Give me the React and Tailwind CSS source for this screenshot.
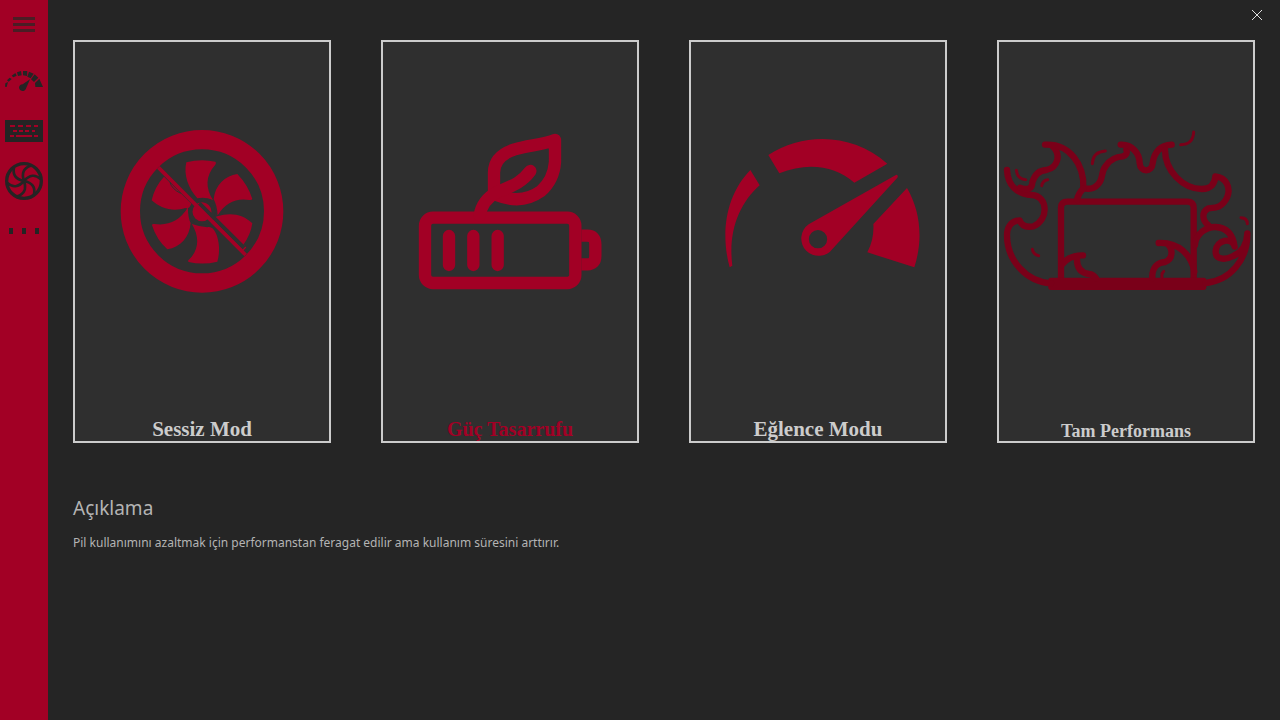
const ink = '#242424'
const red = '#a20025'

function GaugeSmall() {
  return (
    <svg viewBox="0 168 144 150" className="h-full w-full" aria-hidden="true">
      <g fill={ink}>
        <path d="M15 260 L16 250 L24 246 L20 261 Z" />
        <path d="M21 241 L29 233 L35 237 L26 245 Z" />
        <path d="M35 227 L46 219 L50 227 L40 232 Z" />
        <path d="M51 217 L63 213 L65 226 L54 228 Z" />
        <path d="M69 213 L82 213 L81 228 L69 226 Z" />
        <path d="M87 215 L101 221 L92 235 L82 230 Z" />
        <path d="M104 223 L115 233 L102 246 L93 238 Z" />
        <path d="M118 236 L129 261 L106 261 L105 249 Z" />
        <path d="M90 238 L79 263 Q76 273 67 273 Q57 271 57 262 Q59 253 68 253 Z" />
      </g>
    </svg>
  )
}

function KeyboardSmall() {
  return (
    <svg viewBox="0 318 144 150" className="h-full w-full" aria-hidden="true">
      <rect x="15" y="360" width="114" height="66" fill={ink} />
      <g stroke={red} strokeWidth="6">
        <path d="M30 378 H45 M54 378 H69 M78 378 H93 M102 378 H114" />
        <path d="M39 393 H51 M57 393 H69 M75 393 H87 M96 393 H105" />
        <path d="M30 408 H42 M48 408 H96 M102 408 H114" />
      </g>
    </svg>
  )
}

function FanSmall() {
  return (
    <svg viewBox="0 468 144 150" className="h-full w-full" aria-hidden="true">
      <g transform="translate(72 543)" fill="none" stroke={ink} strokeWidth="8">
        <circle r="52" strokeWidth="10" />
        <circle r="6" fill={ink} stroke="none" />
        {[0, 60, 120, 180, 240, 300].map((angle) => (
          <path key={angle} d="M0 0 Q-12 -36 20 -46" transform={`rotate(${angle})`} />
        ))}
      </g>
    </svg>
  )
}

function MoreSmall() {
  return (
    <svg viewBox="0 618 144 150" className="h-full w-full" aria-hidden="true">
      <path d="M27 684 H39 V702 H27 Z M66 684 H78 V702 H66 Z M105 684 H117 V702 H105 Z" fill={ink} />
    </svg>
  )
}

function SilentArt() {
  return (
    <svg viewBox="-105 0 762 540" className="w-full" fill={red} aria-hidden="true">
      <circle cx="276" cy="274" r="215" fill="none" stroke={red} strokeWidth="58" />
      <path d="M229 127 Q273 115 316 125 Q320 128 316 134 C285 168 287 205 309 240 Q285 230 262 235 C235 205 220 165 229 127 Z" />
      <path d="M311 238 C315 195 345 168 382 162 Q414 195 427 237 Q425 241 418 240 C380 233 345 248 323 286 Q321 255 311 238 Z" />
      <path d="M322 289 C360 276 400 282 427 310 Q422 345 400 374 L316 291 Z" />
      <path d="M292 322 C310 315 325 345 327 380 Q328 405 322 425 Q278 436 236 426 Q232 422 238 418 C268 388 268 350 246 312 Q268 320 292 322 Z" />
      <path d="M242 310 C238 352 212 382 172 388 Q140 360 126 316 Q126 311 133 312 C175 318 208 304 234 262 Q233 292 242 310 Z" />
      <path d="M162 170 L248 255 Q238 268 226 264 C190 276 152 266 125 241 Q134 200 162 170 Z" />
      <path d="M310 300 L402 390" stroke={red} strokeWidth="20" />
      <circle cx="276" cy="275" r="34" fill={red} stroke="#2f2f2f" strokeWidth="11" />
      <path d="M256 252 L292 288" stroke="#2f2f2f" strokeWidth="8" />
      <path d="M268 250 L402 384" stroke="#2f2f2f" strokeWidth="12" />
      <path d="M145 142 L407 405" stroke={red} strokeWidth="11" />
      <path d="M180 187 Q185 207 212 220" fill="none" stroke="#2f2f2f" strokeWidth="3" />
    </svg>
  )
}

function SavingArt() {
  return (
    <svg viewBox="-51 0 762 540" className="w-full" fill="none" stroke={red} strokeWidth="37" aria-hidden="true">
      <rect x="75" y="293" width="451" height="196" rx="24" />
      <path d="M544 347 H562 Q586 347 586 373 V407 Q586 433 562 433 H544" />
      <path d="M147 348 V435 M220 348 V435 M293 348 V435" strokeLinecap="round" />
      <path d="M282 222 V158 Q282 108 344 88 C385 76 430 74 465 60 V126 Q461 180 422 214 Q365 255 290 225" strokeLinejoin="round" strokeLinecap="round" />
      <path d="M239 286 Q247 240 290 217 C330 200 364 190 391 153" strokeLinecap="round" />
    </svg>
  )
}

function EntertainmentArt() {
  return (
    <svg viewBox="-56 -15 762 540" className="w-full" fill={red} aria-hidden="true">
      <path d="M122 135 L150 181 C88 236 55 320 68 422 L60 427 C32 325 48 211 122 135 Z" />
      <path d="M176 90 C285 20 430 25 533 116 L434 173 C375 120 290 111 209 145 Z" />
      <path d="M592 189 C634 262 640 345 614 427 L473 382 Q494 343 491 297 Z" />
      <path fillRule="evenodd" d="M560 149 Q567 151 563 158 L369 371 A52 52 0 1 1 297 298 Z M325 315 A27 27 0 1 0 325 370 A27 27 0 1 0 325 315 Z" />
    </svg>
  )
}

function PerformanceArt() {
  return (
    <svg viewBox="12 0 762 540" className="w-full" fill="none" stroke="#7a0019" strokeWidth="19" strokeLinecap="round" strokeLinejoin="round" aria-hidden="true">
      <path d="M198 480 V264 Q198 245 217 245 H577 Q596 245 596 264 V480" />
      <rect x="160" y="473" width="474" height="37" rx="8" fill="#7a0019" stroke="none" />
      <path d="M36 150 C38 195 65 222 110 225 C160 228 162 300 115 319 Q83 325 74 301 C55 302 36 315 36 345 C36 420 92 485 168 490" />
      <path d="M75 203 Q112 216 112 187 C120 160 135 151 154 150 C190 142 198 103 174 80" />
      <path d="M150 74 C225 70 268 135 265 204 Q293 212 310 192 C327 175 315 158 333 137 C350 112 370 110 384 109 Q400 103 394 90" />
      <path d="M265 206 Q250 220 246 240" />
      <path d="M377 74 C410 72 434 100 434 130 C436 158 471 158 473 130 Q480 77 530 74" />
      <path d="M510 90 C510 153 565 207 620 207 C650 207 660 188 661 169 C695 172 708 205 696 233 C680 265 660 263 640 265 C620 275 620 300 640 316" />
      <path d="M600 375 C602 340 635 320 662 321 Q710 323 719 380 C710 350 665 360 662 392 C660 420 690 421 715 408 Q755 390 757 340 C758 420 705 482 632 489" />
      <path d="M200 435 Q222 405 264 406 M246 412 Q243 457 282 462 Q295 463 303 475" />
      <path d="M472 475 C470 440 490 427 510 426 C535 417 535 385 516 371 M491 369 C550 366 590 405 598 455" />
      <g strokeWidth="9">
        <path d="M64 151 Q67 177 92 179 M140 197 Q143 181 158 179 M112 388 Q115 404 131 407" />
        <path d="M292 131 Q294 95 331 93 M557 74 Q594 74 596 36 M738 293 Q757 294 757 311 M501 471 Q499 460 506 454" />
      </g>
    </svg>
  )
}

const sections = [
  { label: 'Performans', Icon: GaugeSmall },
  { label: 'Klavye', Icon: KeyboardSmall },
  { label: 'Fan', Icon: FanSmall },
  { label: 'Diğer', Icon: MoreSmall },
]

const modes = [
  { name: 'Sessiz Mod', Art: SilentArt, text: 'text-[21px] leading-6 text-[#cccccc]' },
  { name: 'Güç Tasarrufu', Art: SavingArt, text: 'text-xl leading-6 text-[#a20025]' },
  { name: 'Eğlence Modu', Art: EntertainmentArt, text: 'text-[21px] leading-6 text-[#cccccc]' },
  { name: 'Tam Performans', Art: PerformanceArt, text: 'text-lg leading-5 text-[#cccccc]' },
]

export default function App() {
  return (
    <div className="flex min-h-screen bg-[#252525] font-['Noto_Sans',sans-serif]">
      <nav className="flex w-12 shrink-0 flex-col bg-[#a20025]">
        <button type="button" aria-label="Menü" className="mb-2 flex h-12 w-full flex-col items-center gap-[3px] pt-[17px]">
          <span className="h-[3px] w-[22px] bg-[#4a1d25]" />
          <span className="h-[3px] w-[22px] bg-[#4a1d25]" />
          <span className="h-[3px] w-[22px] bg-[#4a1d25]" />
        </button>
        {sections.map(({ label, Icon }) => (
          <button key={label} type="button" aria-label={label} className="h-[50px] w-full">
            <Icon />
          </button>
        ))}
      </nav>
      <main className="flex grow flex-col">
        <header className="flex h-10 justify-end">
          <button type="button" aria-label="Kapat" className="flex h-[30px] w-[46px] items-center justify-center">
            <svg viewBox="0 0 10 10" className="size-2.5" stroke="#e0e0e0" strokeWidth="1" aria-hidden="true">
              <path d="M0 0 L10 10 M10 0 L0 10" />
            </svg>
          </button>
        </header>
        <div className="grid grid-cols-4 gap-[50px] px-[25px]">
          {modes.map(({ name, Art, text }) => (
            <button key={name} type="button" className="flex h-[403px] flex-col justify-between border-2 border-[#cccccc] bg-[#2f2f2f] pt-[78px]">
              <Art />
              <span className={`w-full text-center font-['Liberation_Serif',serif] font-bold ${text}`}>{name}</span>
            </button>
          ))}
        </div>
        <section className="px-[25px] pt-[50px] text-[#b4b4b4]">
          <h2 className="text-[19px] leading-[30px]">Açıklama</h2>
          <p className="mt-2.5 text-xs leading-5">
            Pil kullanımını azaltmak için performanstan feragat edilir ama kullanım süresini arttırır.
          </p>
        </section>
      </main>
    </div>
  )
}
